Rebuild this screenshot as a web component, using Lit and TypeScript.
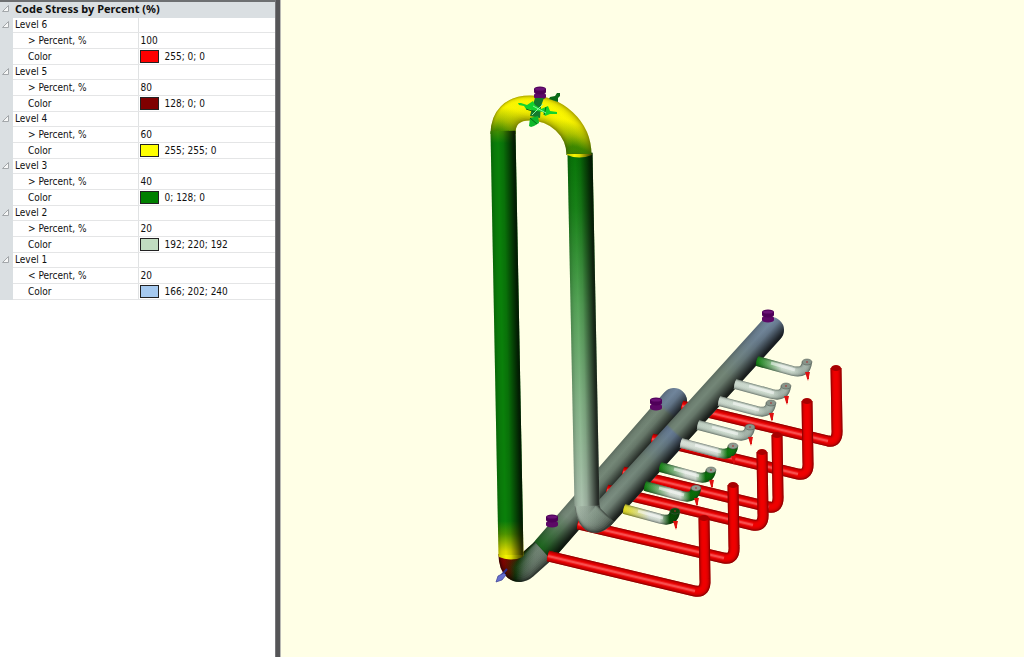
import { LitElement, html, svg, css } from "lit";
import { customElement, state } from "lit/decorators.js";

interface Level {
  name: string;
  sign: string;
  percent: number;
  rgb: [number, number, number];
}

const LEVELS: Level[] = [
  { name: "Level 6", sign: ">", percent: 100, rgb: [255, 0, 0] },
  { name: "Level 5", sign: ">", percent: 80, rgb: [128, 0, 0] },
  { name: "Level 4", sign: ">", percent: 60, rgb: [255, 255, 0] },
  { name: "Level 3", sign: ">", percent: 40, rgb: [0, 128, 0] },
  { name: "Level 2", sign: ">", percent: 20, rgb: [192, 220, 192] },
  { name: "Level 1", sign: "<", percent: 20, rgb: [166, 202, 240] },
];

@customElement("stress-legend")
export class StressLegend extends LitElement {
  static styles = css`
    :host {
      display: block;
      background: #fff;
      border-top: 2px solid #6e7072;
      color: #101010;
      font: 10px/15px "DejaVu Sans Condensed", "DejaVu Sans", sans-serif;
    }
    table {
      width: 100%;
      border-collapse: collapse;
      table-layout: fixed;
    }
    .gutter { width: 13px; }
    .names { width: 125px; }
    th, td {
      height: 15px;
      padding: 0 0 0 2px;
      border-bottom: 1px solid #e4e5e6;
      text-align: left;
      font-weight: normal;
      white-space: nowrap;
      overflow: hidden;
    }
    td.value { border-left: 1px solid #e0e2e3; }
    .level th, .level td { height: 14px; line-height: 14px; }
    tr th.side, tr td.side {
      padding: 0;
      background: #dadfe2;
      border-bottom-color: #dadfe2;
    }
    .title th {
      background: #dadfe2;
      border-color: #dadfe2;
      font: bold 11px/14px "Noto Sans", sans-serif;
      vertical-align: top;
    }
    .child { padding-left: 15px; }
    button {
      display: block;
      width: 13px;
      height: 14px;
      padding: 0 0 0 2px;
      border: 0;
      background: none;
    }
    button svg { display: block; }
    .closed svg { transform: rotate(-45deg); }
    .color {
      display: flex;
      align-items: center;
      gap: 6px;
      height: 15px;
    }
    .swatch {
      box-sizing: border-box;
      width: 19px;
      height: 13px;
      border: 1px solid #222;
    }
    td.value { padding-left: 2px; }
    td.swatched { padding-left: 1px; }
  `;

  @state() private closed = new Set<string>();

  private toggle(key: string) {
    const next = new Set(this.closed);
    if (!next.delete(key)) next.add(key);
    this.closed = next;
  }

  private twisty(key: string) {
    return html`<button
      class=${this.closed.has(key) ? "closed" : ""}
      aria-label="Toggle ${key}"
      aria-expanded=${!this.closed.has(key)}
      @click=${() => this.toggle(key)}
    >
      <svg width="8" height="8" viewBox="0 0 8 8">
        <path d="M6.5 0.5V6.5H0.5Z" fill="#f6f7f7" stroke="#a3a7aa" />
      </svg>
    </button>`;
  }

  render() {
    const root = "Code Stress by Percent (%)";
    return html`<table>
      <colgroup>
        <col class="gutter" />
        <col class="names" />
        <col />
      </colgroup>
      <tbody>
        <tr class="title">
          <th class="side">${this.twisty(root)}</th>
          <th colspan="2" scope="colgroup">${root}</th>
        </tr>
        ${this.closed.has(root) ? "" : LEVELS.map((l) => this.level(l))}
      </tbody>
    </table>`;
  }

  private level(l: Level) {
    const [r, g, b] = l.rgb;
    return html`
      <tr class="level">
        <td class="side">${this.twisty(l.name)}</td>
        <th scope="row">${l.name}</th>
        <td class="value"></td>
      </tr>
      ${this.closed.has(l.name)
        ? ""
        : html`<tr>
              <td class="side"></td>
              <th class="child" scope="row">${l.sign} Percent, %</th>
              <td class="value">${l.percent}</td>
            </tr>
            <tr>
              <td class="side"></td>
              <th class="child" scope="row">Color</th>
              <td class="value swatched">
                <div class="color">
                  <span class="swatch" style="background: rgb(${r}, ${g}, ${b})"></span>
                  <span>${r}; ${g}; ${b}</span>
                </div>
              </td>
            </tr>`}
    `;
  }
}

/* Shaded bend: a dark stroke, then narrower translucent strokes that drift toward the light. */
function tube(d: string, width: number, paint: string, lx: number, ly: number, dark = "#000", depth = 0.55, drift = 0.8) {
  const steps = 9;
  const layers = [];
  for (let i = 1; i <= steps; i++) {
    const w = width * (1 - (i / steps) * 0.75);
    const shift = ((width - w) / 2) * drift;
    layers.push(svg`<path d=${d} stroke=${paint} stroke-width=${w} stroke-opacity="0.26"
      transform="translate(${lx * shift} ${ly * shift})" />`);
  }
  return svg`<g fill="none">
    <path d=${d} stroke=${paint} stroke-width=${width} />
    <path d=${d} stroke=${dark} stroke-opacity=${depth} stroke-width=${width} />
    ${layers}
  </g>`;
}

/* Straight run with a shadow gradient across it; the side left of the downward axis is lit. */
function run(id: string, x1: number, y1: number, x2: number, y2: number, width: number, cap: "butt" | "round") {
  const len = Math.hypot(x2 - x1, y2 - y1);
  const nx = (-(y2 - y1) / len) * (width / 2);
  const ny = ((x2 - x1) / len) * (width / 2);
  const d = `M${x1} ${y1}L${x2} ${y2}`;
  return svg`
    <linearGradient id="${id}-shade" gradientUnits="userSpaceOnUse"
      x1=${x1 + nx} y1=${y1 + ny} x2=${x1 - nx} y2=${y1 - ny}>
      <stop offset="0" stop-opacity="0.2" /><stop offset="0.14" stop-opacity="0.06" />
      <stop offset="0.3" stop-opacity="0" /><stop offset="0.5" stop-opacity="0.12" />
      <stop offset="0.75" stop-opacity="0.5" /><stop offset="0.92" stop-opacity="0.76" />
      <stop offset="1" stop-opacity="0.8" />
    </linearGradient>
    <path d=${d} stroke="url(#${id})" stroke-width=${width} stroke-linecap=${cap} />
    <path d=${d} stroke="url(#${id}-shade)" stroke-width=${width} stroke-linecap=${cap} />`;
}

/* Supply legs, back to front: start, corner and top of the riser. */
const LEGS = [
  { x: 682, y: 406, cx: 828, cy: 441, tx: 836, ty: 368 },
  { x: 652, y: 439, cx: 798, cy: 474, tx: 807, ty: 401 },
  { x: 623, y: 472, cx: 769, cy: 507, tx: 777, ty: 435 },
  { x: 607, y: 490, cx: 753, cy: 525, tx: 762, ty: 452 },
  { x: 578, y: 524, cx: 724, cy: 558, tx: 733, ty: 485 },
  { x: 548, y: 556, cx: 695, cy: 591, tx: 704, ty: 518 },
];

/* Nozzles on the front header with their colours at root, middle and end. */
const NOZZLES = [
  { x: 757, y: 361, ex: 807, ey: 362, c: ["#128212", "#d5e3d6", "#a9b8ae"], top: "#87948a" },
  { x: 735, y: 384, ex: 786, ey: 386, c: ["#d0ddd2", "#d5e3d6", "#a9b8ae"], top: "#87948a" },
  { x: 719, y: 401, ex: 771, ey: 403, c: ["#d0ddd2", "#d5e3d6", "#a9b8ae"], top: "#87948a" },
  { x: 698, y: 425, ex: 750, ey: 427, c: ["#c3d3c6", "#d5e3d6", "#a9b8ae"], top: "#87948a" },
  { x: 681, y: 443, ex: 733, ey: 446, c: ["#dde6dd", "#dde6dd", "#0e7a0e"], top: "#8f9b91" },
  { x: 660, y: 467, ex: 711, ey: 470, c: ["#128212", "#dde6dd", "#087008"], top: "#8f9b91" },
  { x: 645, y: 486, ex: 696, ey: 488, c: ["#128212", "#dde6dd", "#087008"], top: "#8f9b91" },
  { x: 624, y: 509, ex: 675, ey: 511, c: ["#e8e020", "#dde6dd", "#064f06"], top: "#0a470a" },
];

const SUPPORTS = [
  [768, 316],
  [656, 404],
  [552, 521],
  [540, 93],
];

@customElement("pipe-model")
export class PipeModel extends LitElement {
  static styles = css`
    :host { display: block; background: #ffffe6; overflow: hidden; }
    svg { display: block; width: 100%; height: 100%; }
  `;

  private leg(l: (typeof LEGS)[number]) {
    const d = `M${l.x} ${l.y}L${l.cx} ${l.cy}Q${l.tx + 2} ${l.cy + 2} ${l.tx + 1} ${l.cy - 12}L${l.tx} ${l.ty}`;
    return svg`
      ${tube(d, 11, "#f60000", -0.3, -0.2, "#300", 0.6, 0.4)}
      <path d=${`M${l.x} ${l.y}L${l.cx} ${l.cy}`} fill="none" stroke="#ff8a8a" stroke-opacity="0.2"
        stroke-width="4" />
      <path d=${`M${l.x} ${l.y}L${l.cx} ${l.cy}`} fill="none" stroke="#ff9a9a" stroke-opacity="0.4"
        stroke-width="2" />
      <ellipse cx=${l.tx} cy=${l.ty} rx="5" ry="3" fill="#a80000" />`;
  }

  private nozzle(n: (typeof NOZZLES)[number], i: number) {
    const kx = n.ex - 9;
    const ky = n.y + 10;
    const d = `M${n.x} ${n.y}L${kx - 5} ${ky}Q${n.ex - 1} ${ky + 3} ${n.ex} ${n.ey}`;
    return svg`
      <path d="M${n.ex} ${n.ey + 5}L${n.ex + 1} ${n.ey + 17}" stroke="#d01010" stroke-width="2" />
      ${tube(d, 10, `url(#nozzle${i})`, -0.2, -0.5, "#101a12", 0.5, 0.5)}
      <path d=${`M${n.x + 14} ${n.y + 2}L${kx - 3} ${ky - 1}`} stroke="#fff" stroke-width="3" stroke-opacity="0.5" />
      <ellipse cx=${n.ex} cy=${n.ey} rx="5" ry="3" fill=${n.top} stroke="#4a554c" stroke-width="0.5" />
      <path d="M${n.ex - 2} ${n.ey + 10}h5l-2 9z" fill="#e01010" />
      <path d="M${n.ex - 1} ${n.ey}h2" stroke="#a33" />`;
  }

  render() {
    return html`<svg viewBox="281 0 743 657" preserveAspectRatio="xMinYMin meet" role="img" aria-label="Piping stress model">
      <defs>
        <linearGradient id="back" gradientUnits="userSpaceOnUse" x1="682" y1="392" x2="540" y2="557">
          <stop offset="0" stop-color="#71869d" /><stop offset="0.1" stop-color="#6c8094" />
          <stop offset="0.12" stop-color="#728575" /><stop offset="0.78" stop-color="#768979" />
          <stop offset="0.9" stop-color="#3c6e3e" /><stop offset="1" stop-color="#0a610a" />
        </linearGradient>
        <linearGradient id="front" gradientUnits="userSpaceOnUse" x1="780" y1="320" x2="594" y2="522">
          <stop offset="0" stop-color="#748aa3" /><stop offset="0.12" stop-color="#6c8090" />
          <stop offset="0.28" stop-color="#738677" /><stop offset="0.555" stop-color="#738677" />
          <stop offset="0.565" stop-color="#677c96" /><stop offset="0.7" stop-color="#718579" />
          <stop offset="1" stop-color="#7f9183" />
        </linearGradient>
        <linearGradient id="left" gradientUnits="userSpaceOnUse" x1="0" y1="128" x2="0" y2="560">
          <stop offset="0" stop-color="#4f9200" /><stop offset="0.035" stop-color="#0a800a" />
          <stop offset="0.91" stop-color="#0a800a" /><stop offset="0.94" stop-color="#4f9600" />
          <stop offset="0.98" stop-color="#dcdc00" /><stop offset="1" stop-color="#f0f000" />
        </linearGradient>
        <linearGradient id="bend" gradientUnits="userSpaceOnUse" x1="501" y1="134" x2="506" y2="110">
          <stop offset="0" stop-color="#3a8800" /><stop offset="0.5" stop-color="#b0c600" />
          <stop offset="1" stop-color="#fffa00" />
        </linearGradient>
        <linearGradient id="right" gradientUnits="userSpaceOnUse" x1="0" y1="155" x2="0" y2="510">
          <stop offset="0" stop-color="#087608" /><stop offset="0.15" stop-color="#188218" />
          <stop offset="0.42" stop-color="#55a457" /><stop offset="0.7" stop-color="#86b689" />
          <stop offset="1" stop-color="#aec2b1" />
        </linearGradient>
        <linearGradient id="toe" gradientUnits="userSpaceOnUse" x1="583" y1="505" x2="612" y2="520">
          <stop offset="0" stop-color="#aec2b1" /><stop offset="0.8" stop-color="#7f9183" />
        </linearGradient>
        <linearGradient id="heel" gradientUnits="userSpaceOnUse" x1="509" y1="557" x2="534" y2="568">
          <stop offset="0" stop-color="#8a0500" /><stop offset="0.3" stop-color="#571900" />
          <stop offset="0.55" stop-color="#123d0d" /><stop offset="0.8" stop-color="#566f59" />
          <stop offset="1" stop-color="#768979" />
        </linearGradient>
        <linearGradient id="seam" x1="0" y1="0" x2="1" y2="0">
          <stop offset="0" stop-color="#c8c800" /><stop offset="0.3" stop-color="#f4f400" />
          <stop offset="0.5" stop-color="#dcdc00" /><stop offset="0.8" stop-color="#767600" />
          <stop offset="1" stop-color="#3c3c00" />
        </linearGradient>
        ${NOZZLES.map(
          (n, i) => svg`<linearGradient id="nozzle${i}" gradientUnits="userSpaceOnUse" x1=${n.x} y1="0" x2=${n.ex} y2="0">
            <stop offset="0" stop-color=${n.c[0]} /><stop offset="0.5" stop-color=${n.c[1]} />
            <stop offset="0.7" stop-color=${n.c[1]} /><stop offset="0.9" stop-color=${n.c[2]} />
          </linearGradient>`,
        )}
      </defs>

      ${run("back", 674, 401, 545, 549, 26, "round")}
      ${tube("M511 554C511 568 518 573 525 567L543 551", 25, "url(#heel)", -0.6, -0.6, "#000", 0.6)}
      ${LEGS.map((l) => this.leg(l))}

      ${run("front", 771, 330, 602, 516, 26, "round")}
      ${tube("M587 503C588 518 594 525 601 517L605 513", 25, "url(#toe)", -0.9, -0.3, "#000", 0.6, 0.9)}
      ${run("right", 580, 153, 587, 506, 25, "butt")}

      ${tube("M503 134C503 118 512 108 530 108C556 108 579 128 579 155", 25, "url(#bend)", -0.4, -0.5, "#4a4200", 0.45, 0.9)}
      <path d="M567 154H592V155Q579 160 567 155Z" fill="url(#seam)" />
      ${run("left", 503, 131, 511, 556, 25, "butt")}
      <path d="M499 555H523V557Q511 562 499 557Z" fill="url(#seam)" />

      ${NOZZLES.map((n, i) => this.nozzle(n, i))}

      ${SUPPORTS.map(
        ([x, y]) => svg`<g transform="translate(${x} ${y})">
          <path d="M-4 -3H4V3H-4Z" fill="#3c0045" />
          <path d="M-6 2a6 2.500 0 0 1 12 0v2a6 2.500 0 0 1 -12 0z" fill="#5c0866" />
          <path d="M-6 -4a6 2.500 0 0 1 12 0v3a6 2.500 0 0 1 -12 0z" fill="#4f0059" />
          <ellipse cy="-4" rx="5" ry="1.500" fill="#6b1276" />
        </g>`,
      )}

      <path d="M535 98L544 98L541 106L540 118L530 116L532 108Z" fill="#147a2c" />
      <path d="M550 97L555 96L557 93L560 93L560 96L558 98L558 102L549 99Z" fill="#0a6a17" />
      <path d="M530 118L538 116L539 123L534 126L531 127L529 126Z" fill="#0db82a" />
      <path d="M518 103L521 103L527 105L533 101L535 105L541 109L548 106L550 111L557 112L557 114L550 114L545 116L543 112L537 111L526 109L524 106L519 105Z"
        fill="#12d32d" />
      <path d="M526 109L535 112M544 115L546 107M530 118L537 124" stroke="#056b13" />
      <path d="M533 106L546 113M543 104L532 115" stroke="#8cf5a0" stroke-width="1" />

      <path d="M507 569L500 577" stroke="#2c2c8c" stroke-width="2" />
      <path d="M498 576L504 573L506 575L502 580L496 582Z" fill="#6670cf" stroke="#3a3f91" stroke-width="0.7" />
    </svg>`;
  }
}

@customElement("app-root")
export class AppRoot extends LitElement {
  static styles = css`
    :host {
      display: grid;
      grid-template-columns: 275px 6px minmax(0, 1fr);
      height: 100vh;
      overflow: hidden;
    }
    .splitter {
      box-sizing: border-box;
      background: #555557;
      border-right: 1px solid #b9b9b4;
      box-shadow: inset 1px 0 #77777a;
    }
    .model { min-height: 0; }
  `;

  render() {
    return html`
      <stress-legend></stress-legend>
      <div class="splitter" role="separator" aria-orientation="vertical"></div>
      <pipe-model class="model"></pipe-model>
    `;
  }
}
